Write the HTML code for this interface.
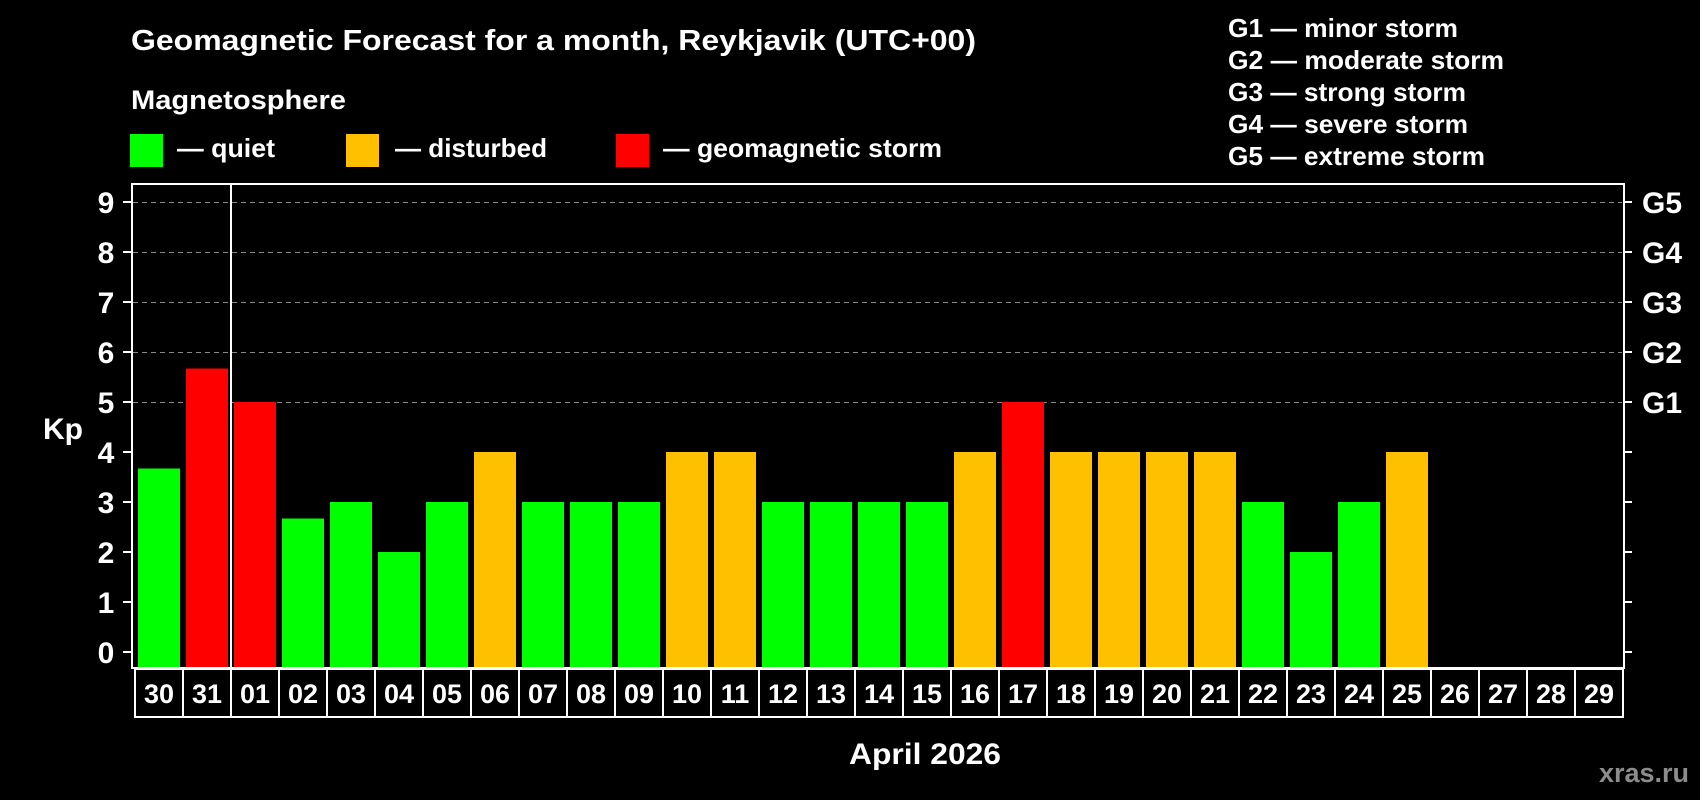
<!DOCTYPE html>
<html><head><meta charset="utf-8"><style>
html,body{margin:0;padding:0;background:#000;width:1700px;height:800px;overflow:hidden}
svg text{font-family:"Liberation Sans",Arial,sans-serif;font-weight:bold;fill:#fff}
</style></head><body>
<svg width="1700" height="800" xmlns="http://www.w3.org/2000/svg">
<rect width="1700" height="800" fill="#000"/>
<text x="131" y="50" font-size="29" textLength="845" lengthAdjust="spacingAndGlyphs">Geomagnetic Forecast for a month, Reykjavik (UTC+00)</text>
<text x="131" y="109" font-size="27" textLength="215" lengthAdjust="spacingAndGlyphs">Magnetosphere</text>
<rect x="130" y="134" width="33" height="33" fill="#00ff00"/>
<text x="177" y="157" font-size="26" textLength="98" lengthAdjust="spacingAndGlyphs">— quiet</text>
<rect x="346" y="134" width="33" height="33" fill="#ffc000"/>
<text x="395" y="157" font-size="26" textLength="152" lengthAdjust="spacingAndGlyphs">— disturbed</text>
<rect x="616" y="134" width="33" height="33" fill="#ff0000"/>
<text x="663" y="157" font-size="26" textLength="279" lengthAdjust="spacingAndGlyphs">— geomagnetic storm</text>
<g font-size="26">
<text x="1228" y="37" textLength="230" lengthAdjust="spacingAndGlyphs">G1 — minor storm</text>
<text x="1228" y="69" textLength="276" lengthAdjust="spacingAndGlyphs">G2 — moderate storm</text>
<text x="1228" y="101" textLength="238" lengthAdjust="spacingAndGlyphs">G3 — strong storm</text>
<text x="1228" y="133" textLength="240" lengthAdjust="spacingAndGlyphs">G4 — severe storm</text>
<text x="1228" y="165" textLength="257" lengthAdjust="spacingAndGlyphs">G5 — extreme storm</text>
</g>
<g id="grid" stroke="#888" stroke-width="1" stroke-dasharray="5,4">
<line x1="133" x2="1622" y1="202.5" y2="202.5"/>
<line x1="133" x2="1622" y1="252.5" y2="252.5"/>
<line x1="133" x2="1622" y1="302.5" y2="302.5"/>
<line x1="133" x2="1622" y1="352.5" y2="352.5"/>
<line x1="133" x2="1622" y1="402.5" y2="402.5"/>
</g>
<g id="bars"></g>
<rect x="132" y="184" width="1492" height="484" fill="none" stroke="#fff" stroke-width="2"/>
<line x1="231" y1="183" x2="231" y2="717" stroke="#fff" stroke-width="2"/>
<g id="ticks" stroke="#fff" stroke-width="2"></g>
<g id="ylab" font-size="30" text-anchor="middle"></g>
<g font-size="30">
<text x="1642" y="213">G5</text><text x="1642" y="263">G4</text><text x="1642" y="313">G3</text><text x="1642" y="363">G2</text><text x="1642" y="413">G1</text>
</g>
<text x="63" y="439" font-size="30" text-anchor="middle">Kp</text>
<g id="dates" font-size="27" text-anchor="middle"></g>
<text x="925" y="764" font-size="30" text-anchor="middle" textLength="152" lengthAdjust="spacingAndGlyphs">April 2026</text>
<text x="1689" y="782" font-size="27" text-anchor="end" style="fill:#8c8c8c">xras.ru</text>
</svg>
<script>
var ns="http://www.w3.org/2000/svg";
function el(t,a,p,txt){var e=document.createElementNS(ns,t);for(var k in a)e.setAttribute(k,a[k]);if(txt!=null)e.textContent=txt;document.getElementById(p).appendChild(e);}
var G="#00ff00",O="#ffc000",R="#ff0000";
var d=[[3.67,G],[5.67,R],[5,R],[2.67,G],[3,G],[2,G],[3,G],[4,O],[3,G],[3,G],[3,G],[4,O],[4,O],[3,G],[3,G],[3,G],[3,G],[4,O],[5,R],[4,O],[4,O],[4,O],[4,O],[3,G],[2,G],[3,G],[4,O]];
for(var i=0;i<d.length;i++){var h=d[i][0]*50+16;el("rect",{x:138+i*48,y:668-h,width:42,height:h,fill:d[i][1]},"bars");}
var labs=["30","31"];for(var i=1;i<=29;i++)labs.push((i<10?"0":"")+i);
for(var i=0;i<31;i++){el("text",{x:159+i*48,y:703},"dates",labs[i]);}
el("rect",{x:135,y:669,width:1488,height:48,fill:"none",stroke:"#fff","stroke-width":2},"ticks");
for(var i=1;i<31;i++){var x=183+(i-1)*48;el("line",{x1:x,x2:x,y1:669,y2:717},"ticks");}
for(var k=0;k<=9;k++){var y=652-50*k;el("line",{x1:123,x2:131,y1:y,y2:y},"ticks");el("line",{x1:1624,x2:1632,y1:y,y2:y},"ticks");el("text",{x:106,y:y+11},"ylab",""+k);}
</script>
</body></html>
